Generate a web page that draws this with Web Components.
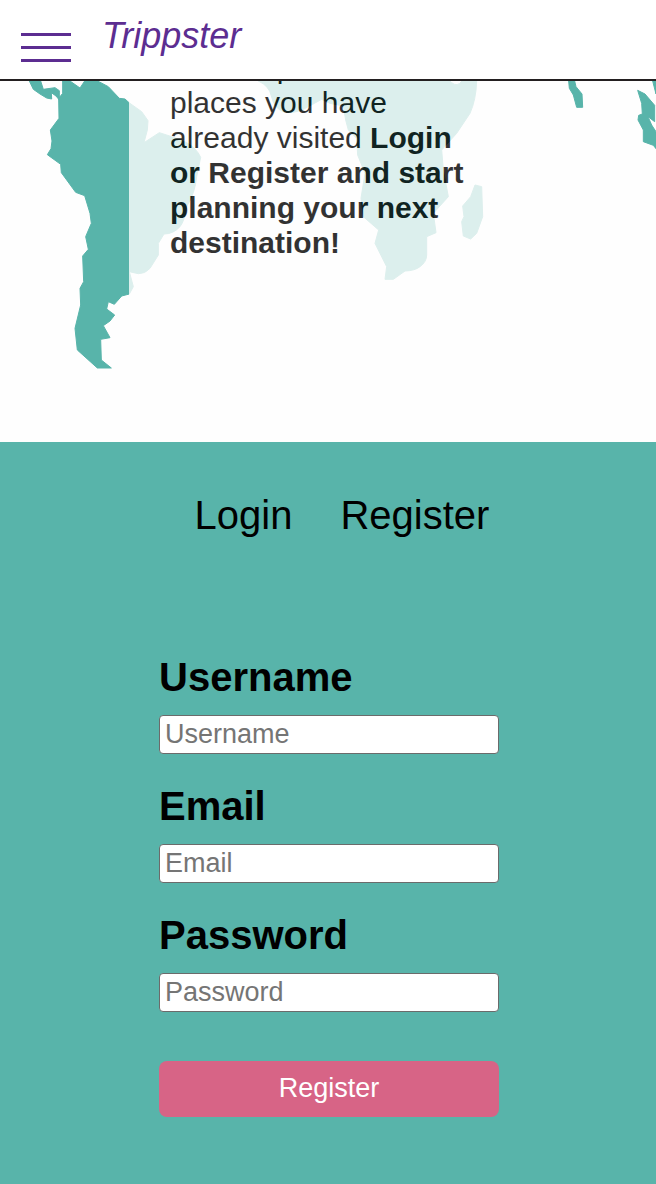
<!DOCTYPE html>
<html lang="en">
<head>
<meta charset="utf-8">
<meta name="viewport" content="width=device-width, initial-scale=1">
<title>Trippster</title>
<style>
  body { margin: 0; font-family: "Liberation Sans", Helvetica, Arial, sans-serif; color: #000; }
</style>
</head>
<body>
<trip-app></trip-app>

<script>
const define = (name, html) => {
  const template = document.createElement('template');
  template.innerHTML = html;
  customElements.define(name, class extends HTMLElement {
    constructor() {
      super();
      this.attachShadow({ mode: 'open' }).append(template.content.cloneNode(true));
    }
  });
};

define('trip-header', `
  <style>
    :host { display: flex; align-items: flex-start; gap: 31px; box-sizing: border-box;
      min-height: 81px; padding: 16px 21px 0; background: #fff; border-bottom: 2px solid #231f20; }
    button { display: grid; gap: 10px; margin: 17px 0 0; padding: 0; border: 0; background: none; cursor: pointer; }
    i { display: block; width: 50px; height: 3px; background: #5c2d91; }
    a { font-size: 36px; line-height: 40px; font-style: italic; color: #5c2d91; text-decoration: none; }
  </style>
  <button type="button" aria-label="Menu"><i></i><i></i><i></i></button>
  <a href="#"><slot></slot></a>
`);

define('world-map', `
  <style>
    :host { display: block; }
    svg { display: block; width: 100%; height: 100%; fill: #58b4aa; stroke: #58b4aa; stroke-width: 3; stroke-linejoin: round; }
  </style>
  <svg viewBox="0 33 1968 1083" preserveAspectRatio="xMidYMid slice" aria-hidden="true">
    <path d="M88 33L100 58 120 72 140 84 155 87 154 68 168 78 178 90 178 62 165 53 130 58 122 33Z"/>
    <path d="M188 33L210 33 240 54 254 33 293 33 325 50 358 85 375 87 387 98 425 125 444 152 442 180 432 218 478 188 515 200 560 218 Q590 235 602 262 L590 320 Q585 370 560 410 Q555 450 540 470 Q520 492 492 492 L475 520 475 555 450 595 Q435 612 415 611 L388 605 400 650 388 672 365 678 343 703 325 695 320 717 344 735 330 753 310 767 330 803 302 808 304 870 334 894 292 894 232 840 225 775 242 705 240 655 251 635 248 558 265 538 257 500 274 460 270 430 254 377 227 367 184 308 182 283 142 254 153 236 156 213 151 180 177 145 176 85 188 70Z"/>
    <path d="M775 33Q808 48 814 78 Q822 115 850 125 Q880 132 910 118 L965 88 990 100 1030 108 1037 150 1045 180 1070 205 1073 255 1095 310 1083 385 1090 440 1136 480 1125 520 1160 590 1155 628 1180 628 1215 603 Q1245 602 1260 590 Q1280 575 1280 555 L1280 500 1308 488 1300 430 1345 380 1330 300 1325 240 1370 190 1410 130 Q1428 90 1430 33 L1386 33 Q1372 52 1355 38 L1350 33Z"/>
    <path d="M1425 345L1445 350 1448 440 1430 490 1412 507 1390 498 1385 455 1392 440 1388 408 1412 380Z"/>
    <path d="M1706 33L1724 33 1728 50 1746 72 1748 112 1730 112 1720 75 1708 55Z"/>
    <path d="M1913 61L1935 72 1964 106 1964 155 1944 140 1955 165 1968 185 1968 236 1960 226 1930 215 1930 180 1914 150 1916 136 1927 132 1925 100Z"/>
    <path d="M1958 33L1968 33 1968 72Z"/>
  </svg>
`);

define('trip-hero', `
  <style>
    :host { position: relative; display: flex; flex-direction: column; justify-content: flex-end;
      align-items: center; height: 361px; overflow: hidden; background: #fefefe; }
    world-map { position: absolute; inset: 0; }
    .card { position: relative; flex: none; box-sizing: border-box; width: 398px; max-width: 100%;
      padding: 0 41px 182px; background: #fefefe; opacity: .8; }
    p { margin: 0; font-size: 30px; line-height: 35px; }
  </style>
  <world-map></world-map>
  <div class="card"><p><slot></slot></p></div>
`);

define('form-tabs', `
  <style>
    :host { display: flex; justify-content: center; gap: 48px; padding-left: 26px; }
    a { font-size: 40px; line-height: 46px; color: #000; text-decoration: none; }
  </style>
  <a href="#login">Login</a>
  <a href="#register">Register</a>
`);

customElements.define('form-field', class extends HTMLElement {
  connectedCallback() {
    const label = this.getAttribute('label');
    this.attachShadow({ mode: 'open' }).innerHTML = `
      <style>
        :host { display: grid; gap: 15px; }
        label { font-size: 40px; line-height: 46px; font-weight: bold; }
        input { box-sizing: border-box; width: 100%; height: 39px; margin: 0; padding: 0 5px;
          font: 27px/32px "Liberation Sans", Helvetica, Arial, sans-serif; color: #000;
          background: #fff; border: 1px solid #6b6b6b; border-radius: 4px; }
        input::placeholder { color: #757575; opacity: 1; }
      </style>
      <label for="field">${label}</label>
      <input id="field" type="${this.getAttribute('type') || 'text'}" placeholder="${label}">`;
  }
});

define('register-form', `
  <style>
    :host { display: block; width: 340px; max-width: 100%; }
    form { display: grid; gap: 29px; }
    button { height: 56px; margin: 20px 0 0; padding: 0 0 2px; border: 0; border-radius: 8px; background: #d76486;
      color: #fff; font: 27px/32px "Liberation Sans", Helvetica, Arial, sans-serif; cursor: pointer; }
  </style>
  <form>
    <form-field label="Username"></form-field>
    <form-field label="Email" type="email"></form-field>
    <form-field label="Password" type="password"></form-field>
    <button type="submit">Register</button>
  </form>
`);

define('trip-app', `
  <style>
    :host { display: flex; flex-direction: column; min-height: 100vh; }
    main { flex: 1; display: flex; flex-direction: column; }
    section { flex: 1; display: flex; flex-direction: column; align-items: center; gap: 116px;
      padding: 50px 0 66px 2px; background: #58b4aa; }
  </style>
  <trip-header>Trippster</trip-header>
  <main>
    <trip-hero>and keep track of places you have already visited <b>Login or Register and start planning your next destination!</b></trip-hero>
    <section>
      <form-tabs></form-tabs>
      <register-form></register-form>
    </section>
  </main>
`);
</script>
</body>
</html>
